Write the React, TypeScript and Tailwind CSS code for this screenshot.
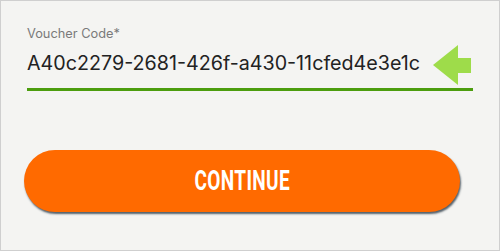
import React from "react";

export default function App() {
  return (
    <div
      className="w-[500px] h-[251px] border border-[#cfcfcf] bg-[#f4f4f2] pl-[23px] flex flex-col"
      style={{ fontFamily: "Inter, Roboto, sans-serif" }}
    >
      <div className="ml-[3px] w-[446px] flex flex-col">
        <div className="mt-[26px] text-[12.8px] leading-[14px] text-[#7a7a7a]">Voucher Code*</div>
        <div className="mt-[4px] h-[40px] flex items-start">
          <span className="mt-[6px] text-[19.7px] leading-[24px] text-[#222222]">
            A40c2279-2681-426f-a430-11cfed4e3e1c
          </span>
          <svg className="ml-auto mr-[2px]" width="38" height="40" viewBox="0 0 38 40">
            <polygon points="0,20 25,0 25,13 38,13 38,28 25,28 25,40" fill="#9edc4a" />
          </svg>
        </div>
        <div className="mt-[3px] h-[3px] bg-[#4c9d0e]" />
      </div>
      <button className="mt-[59px] w-[436px] h-[62px] rounded-full bg-[#ff6a00] shadow-[1px_2px_2px_rgba(30,45,60,0.75)] flex items-center justify-center">
        <span
          className="inline-block text-white font-bold text-[28px] leading-[28px] scale-x-[0.68] tracking-[0.5px]"
          style={{ fontFamily: "Roboto, sans-serif" }}
        >
          CONTINUE
        </span>
      </button>
    </div>
  );
}
